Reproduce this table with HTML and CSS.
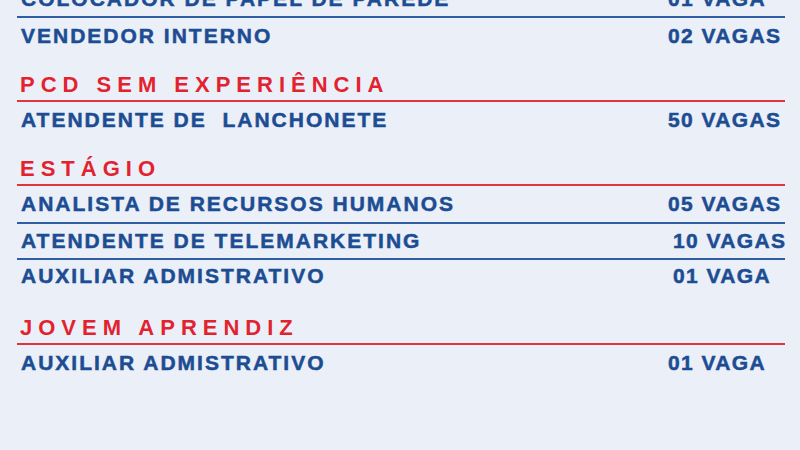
FILE: index.html
```html
<!DOCTYPE html>
<html lang="pt-BR">
<head>
<meta charset="utf-8">
<title>Vagas</title>
<link rel="stylesheet" href="styles.css">
</head>
<body>
<main class="sheet">
  <section class="group first">
    <div class="row ruled h34"><span class="job">COLOCADOR DE PAPEL DE PAREDE</span><span class="qty">01 VAGA</span></div>
    <div class="row"><span class="job">VENDEDOR INTERNO</span><span class="qty">02 VAGAS</span></div>
  </section>
  <section class="group">
    <h2 class="heading">PCD SEM EXPERIÊNCIA</h2>
    <div class="row"><span class="job">ATENDENTE DE&nbsp; LANCHONETE</span><span class="qty">50 VAGAS</span></div>
  </section>
  <section class="group">
    <h2 class="heading">ESTÁGIO</h2>
    <div class="row ruled"><span class="job">ANALISTA DE RECURSOS HUMANOS</span><span class="qty">05 VAGAS</span></div>
    <div class="row ruled h34"><span class="job">ATENDENTE DE TELEMARKETING</span><span class="qty shift">10 VAGAS</span></div>
    <div class="row h32"><span class="job">AUXILIAR ADMISTRATIVO</span><span class="qty shift">01 VAGA</span></div>
  </section>
  <section class="group wide">
    <h2 class="heading">JOVEM APRENDIZ</h2>
    <div class="row"><span class="job">AUXILIAR ADMISTRATIVO</span><span class="qty">01 VAGA</span></div>
  </section>
</main>
</body>
</html>
```
FILE: styles.css
```css
html, body {
  margin: 0;
  padding: 0;
  background: #ebeff8;
  overflow: hidden;
}
body {
  width: 800px;
  height: 450px;
  font-family: "Liberation Sans", Arial, sans-serif;
}
.sheet {
  margin-top: -18px;
  padding-left: 17px;
  width: 768px;
}
.group { margin-top: 16px; }
.group.first { margin-top: 0; }
.group.wide { margin-top: 21px; }
.row {
  display: grid;
  grid-template-columns: 651px 1fr;
  align-items: center;
  height: 36px;
  line-height: 36px;
  font-size: 21px;
  font-weight: 700;
  letter-spacing: 2px;
  color: #1c4d93;
  -webkit-text-stroke: 0.5px #1c4d93;
  white-space: nowrap;
}
.row.h34 { height: 34px; line-height: 34px; }
.row.h32 { height: 32px; line-height: 32px; }
.row.ruled { border-bottom: 2px solid #2f5ea5; }
.job { padding-left: 4px; }
.qty { letter-spacing: 1.4px; }
.qty.shift { padding-left: 5px; }
.heading {
  margin: 0;
  height: 30px;
  line-height: 30px;
  padding-left: 3px;
  font-size: 22px;
  font-weight: 700;
  letter-spacing: 6px;
  color: #e2232f;
  border-bottom: 2px solid #e0343f;
  white-space: nowrap;
}
```
